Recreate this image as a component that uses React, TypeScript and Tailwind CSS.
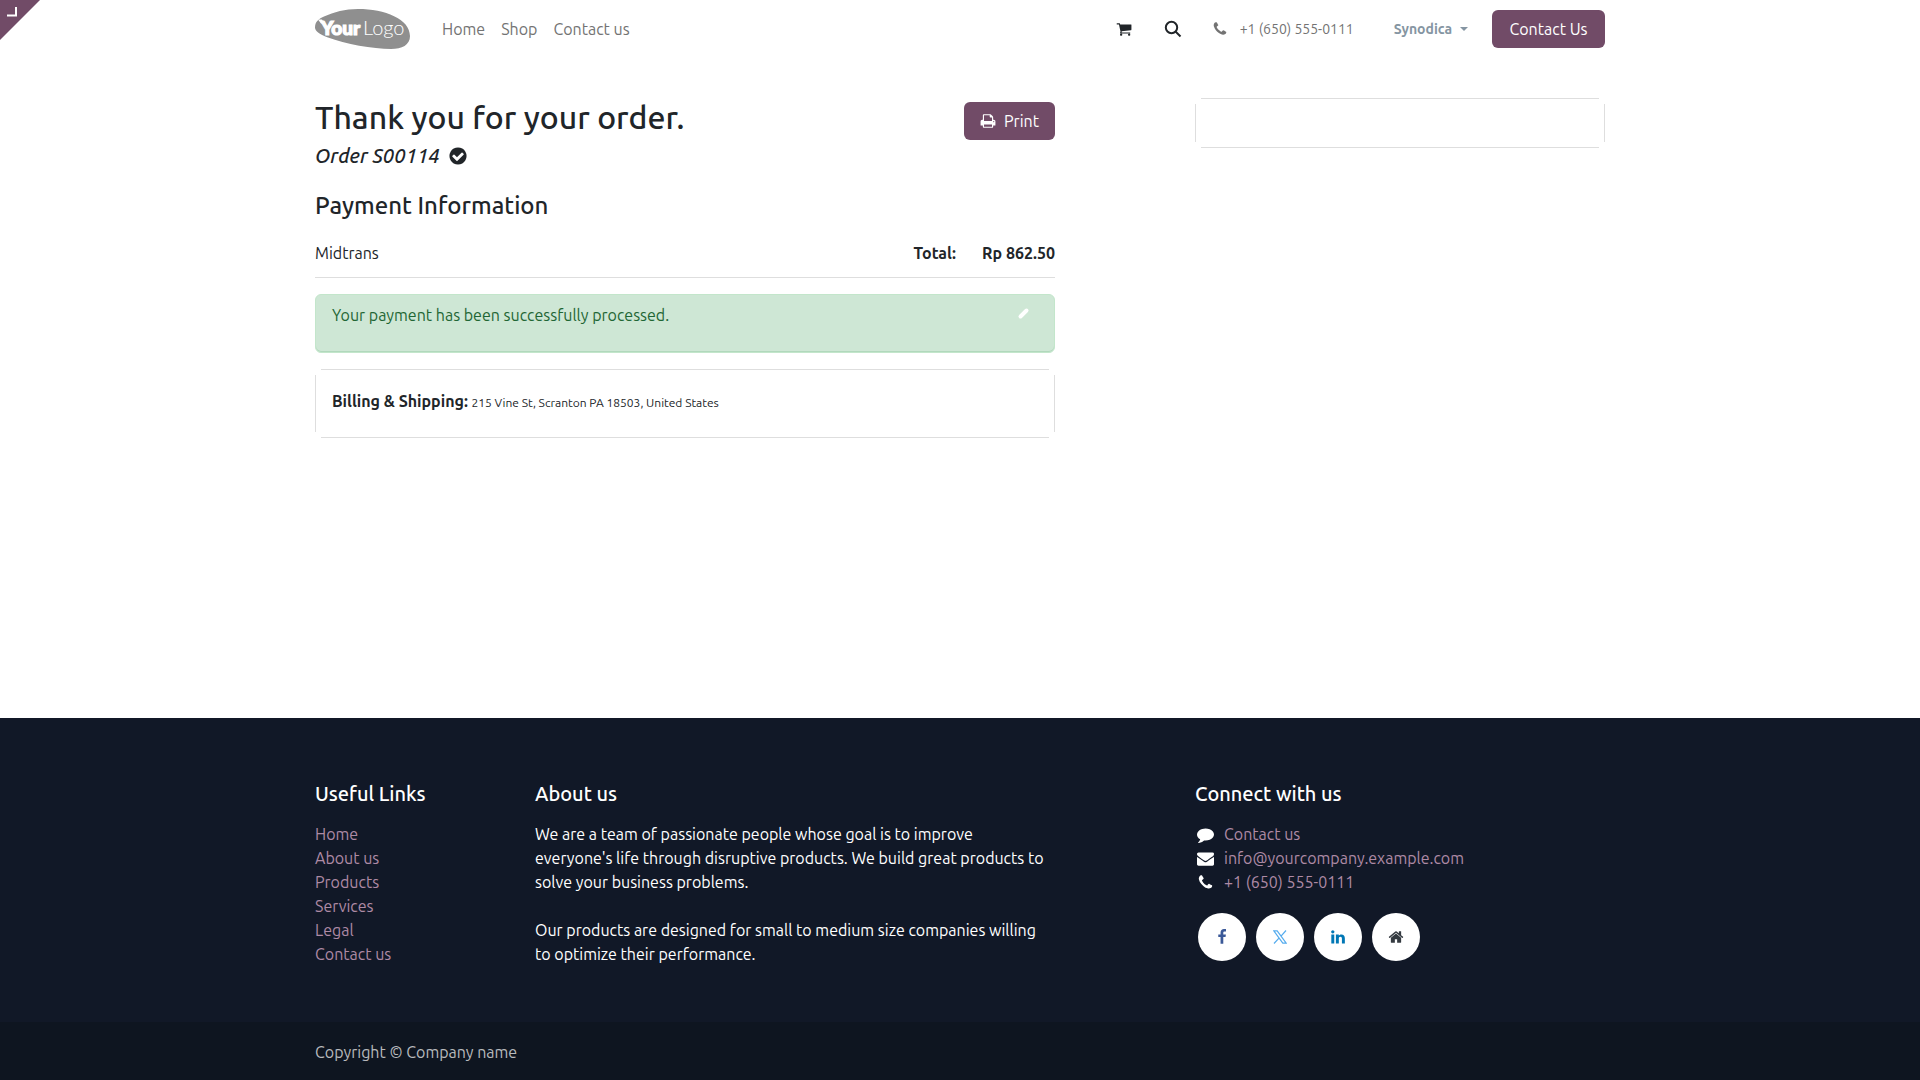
import type { ReactNode } from "react";

const ICONS = {
  cart: "M704 1536q0 52-38 90t-90 38-90-38-38-90 38-90 90-38 90 38 38 90zm896 0q0 52-38 90t-90 38-90-38-38-90 38-90 90-38 90 38 38 90zm128-1088v512q0 24-16.5 42.5t-40.5 21.5l-1044 122q13 60 13 70 0 16-24 64h920q26 0 45 19t19 45-19 45-45 19h-1024q-26 0-45-19t-19-45q0-11 8-31.5t16-36 21.5-40 15.5-29.5l-177-823h-204q-26 0-45-19t-19-45 19-45 45-19h256q16 0 28.5 6.5t19.5 15.5 13 24.5 8 26 5.5 29.5 4.5 26h1201q26 0 45 19t19 45z",
  phone: "M1600 1240q0 27-10 70.5t-21 68.5q-21 50-122 106-94 51-186 51-27 0-53-3.5t-57.5-12.5-47-14.5-55.5-20.5-49-18q-98-35-175-83-127-79-264-216t-216-264q-48-77-83-175-3-9-18-49t-20.5-55.5-14.5-47-12.5-57.5-3.5-53q0-92 51-186 56-101 106-122 25-11 68.5-21t70.5-10q14 0 21 3 18 6 53 76 11 19 30 54t35 63.5 31 53.5q3 4 17.5 25t21.5 35.5 7 28.5q0 20-28.5 50t-62 55-62 53-28.5 46q0 9 5 22.5t8.5 20.5 14 24 11.5 19q76 137 174 235t235 174q2 1 19 11.5t24 14 20.5 8.5 22.5 5q18 0 46-28.5t53-62 55-62 50-28.5q14 0 28.5 7t35.5 21.5 25 17.5q25 15 53.5 31t63.5 35 54 30q70 35 76 53 3 7 3 21z",
  print: "M448 1536h896v-256h-896v256zm0-640h896v-384h-160q-40 0-68-28t-28-68v-160h-640v640zm1152 64q0-26-19-45t-45-19-45 19-19 45 19 45 45 19 45-19 19-45zm128 0v416q0 13-9.5 22.5t-22.5 9.5h-224v160q0 40-28 68t-68 28h-960q-40 0-68-28t-28-68v-160h-224q-13 0-22.5-9.5t-9.5-22.5v-416q0-79 56.5-135.5t135.5-56.5h64v-544q0-40 28-68t68-28h672q40 0 88 20t76 48l152 152q28 28 48 76t20 88v256h64q79 0 135.5 56.5t56.5 135.5z",
  check: "M1412 734q0-28-18-46l-91-90q-19-19-45-19t-45 19l-408 407-226-226q-19-19-45-19t-45 19l-91 90q-18 18-18 46 0 27 18 45l362 362q19 19 45 19 27 0 46-19l543-543q18-18 18-45zm252 162q0 209-103 385.5t-279.5 279.5-385.5 103-385.5-103-279.5-279.5-103-385.5 103-385.5 279.5-279.5 385.5-103 385.5 103 279.5 279.5 103 385.5z",
  comment: "M1792 896q0 174-120 321.5t-326 233-450 85.5q-70 0-145-8-198 175-460 242-49 14-114 22-17 2-30.5-9t-17.5-29v-1q-3-4-.5-12t2-10 4.5-9.5l6-9 7-8.5 8-9q7-8 31-34.5t34.5-38 31-39.5 32.5-51 27-59 26-76q-157-89-247.5-220t-90.5-281q0-130 71-248.5t191-204.5 286-136.5 348-50.5q244 0 450 85.5t326 233 120 321.5z",
  envelope: "M1792 710v794q0 66-47 113t-113 47h-1472q-66 0-113-47t-47-113v-794q44 49 101 87 362 246 497 345 57 42 92.5 65.5t94.5 48 110 24.5h2q51 0 110-24.5t94.5-48 92.5-65.5q170-123 498-345 57-39 100-87zm0-294q0 79-49 151t-122 123q-376 261-468 325-10 7-42.5 31t-54 38-52 32.5-57.5 27-50 9h-2q-23 0-50-9t-57.5-27-52-32.5-54-38-42.5-31q-91-64-262-182.5t-205-142.5q-62-42-117-115.5t-55-136.5q0-78 41.5-130t118.5-52h1472q65 0 112.5 47t47.5 113z",
  facebook: "M1343 12v264h-157q-86 0-116 36t-30 108v189h293l-39 296h-254v759h-306v-759h-255v-296h255v-218q0-186 104-288.5t277-102.5q147 0 228 12z",
  linkedin: "M477 625v991h-330v-991h330zm21-306q1 73-50.5 122t-135.5 49h-2q-82 0-132-49t-50-122q0-74 51.5-122.5t134.5-48.5 133 48.5 51 122.5zm1166 729v568h-329v-530q0-105-40.5-164.5t-126.5-59.5q-63 0-105.5 34.5t-63.5 85.5q-11 30-11 81v553h-329q2-399 2-647t-1-296l-1-48h329v144h-2q20-32 41-56t56.5-52 87-43.5 114.5-15.5q171 0 275 113.5t104 332.5z",
  home: "M1472 992v480q0 26-19 45t-45 19h-384v-384h-256v384h-384q-26 0-45-19t-19-45v-480q0-1 .5-3t.5-3l575-474 575 474q1 2 1 6zm223-69l-62 74q-8 9-21 11h-3q-13 0-21-7l-692-577-692 577q-12 8-24 7-13-2-21-11l-62-74q-8-10-7-23.5t11-21.5l719-599q32-26 76-26t76 26l244 204v-195q0-14 9-23t23-9h192q14 0 23 9t9 23v408l219 182q10 8 11 21.5t-7 23.5z",
};

function Icon({ name, className = "h-4 w-4" }: { name: keyof typeof ICONS; className?: string }) {
  return (
    <svg viewBox="0 0 1792 1792" fill="currentColor" className={className} aria-hidden="true">
      <path d={ICONS[name]} />
    </svg>
  );
}

function Container({ children, className = "" }: { children: ReactNode; className?: string }) {
  return <div className={`mx-auto w-full max-w-[1320px] px-[15px] ${className}`}>{children}</div>;
}

// Card whose border stops short of its four corners
function Card({ children, className = "" }: { children?: ReactNode; className?: string }) {
  return (
    <div
      className={`relative px-[17px] before:pointer-events-none before:absolute before:inset-x-0 before:inset-y-1.5 before:border-x before:border-[#dedede] after:pointer-events-none after:absolute after:inset-x-1.5 after:inset-y-0 after:border-y after:border-[#dedede] ${className}`}
    >
      {children}
    </div>
  );
}

function Logo() {
  return (
    <svg viewBox="0 0 95 40" className="h-10 w-[95px]" role="img" aria-label="Your Logo">
      <path
        d="M0 18.5C0 13 3 10 9 7.5C19 3 30 0 43 0C70 0 95 10 95 27C95 36 87 40 76 40C58 40 30 35 13 28.5C4 25 0 22 0 18.5Z"
        fill="#8f8f8f"
      />
      <path d="M3 10.5h4l2 4h-3z" fill="#fff" />
      <text x="6" y="25.5" fill="#fff" stroke="#fff" strokeWidth="1.2" fontFamily="Lato, sans-serif" fontSize="19" fontWeight="900">
        Your
      </text>
      <text x="48" y="25.5" fill="#fff" fontFamily="Lato, sans-serif" fontSize="20" fontWeight="300">
        Logo
      </text>
    </svg>
  );
}

function Header() {
  return (
    <header>
      <Container className="flex h-[58px] items-center">
        <a href="#">
          <Logo />
        </a>
        <nav className="ml-8 flex gap-4 text-[#737373]">
          <a href="#">Home</a>
          <a href="#">Shop</a>
          <a href="#">Contact us</a>
        </nav>
        <div className="ml-auto flex items-center text-[#212529]">
          <a href="#" aria-label="Cart">
            <Icon name="cart" />
          </a>
          <button type="button" aria-label="Search" className="ml-8">
            <svg viewBox="0 0 18 18" className="h-[18px] w-[18px]" fill="none" stroke="currentColor" strokeWidth="2">
              <circle cx="7.5" cy="7.5" r="5.7" />
              <path d="M11.5 11.5L16.5 16.5" />
            </svg>
          </button>
          <a href="#" className="ml-[30px] flex items-center gap-3 text-sm text-[#737373]">
            <Icon name="phone" />
            +1 (650) 555-0111
          </a>
          <button type="button" className="ml-10 flex items-center gap-2 text-sm font-bold text-[#8595a2]">
            Synodica
            <span className="border-x-4 border-t-4 border-x-transparent" />
          </button>
          <button type="button" className="ml-6 h-[38px] w-[113px] rounded-md bg-[#714b67] text-white">
            Contact Us
          </button>
        </div>
      </Container>
    </header>
  );
}

function Order() {
  return (
    <main className="flex-1 pt-10 pb-16 text-[#212529]">
      <Container className="grid grid-cols-12 gap-x-[30px]">
        <div className="col-span-7">
          <div className="flex items-start justify-between">
            <div>
              <h1 className="text-[32px] leading-[38px] font-medium">Thank you for your order.</h1>
              <p className="mt-1.5 flex items-center gap-2 text-xl leading-7 font-medium">
                <em>Order S00114</em>
                <Icon name="check" className="h-5 w-5" />
              </p>
            </div>
            <button type="button" className="mt-1 flex h-[38px] items-center gap-2 rounded-md bg-[#714b67] px-4 text-white">
              <Icon name="print" />
              Print
            </button>
          </div>
          <h2 className="mt-5 text-2xl leading-8 font-medium">Payment Information</h2>
          <div className="mt-[19px] flex justify-between border-b border-[#dedede] pb-3">
            <span>Midtrans</span>
            <div className="flex gap-[26px] font-bold">
              <span>Total:</span>
              <span>Rp 862.50</span>
            </div>
          </div>
          <div className="mt-4 flex h-[59px] justify-between rounded-md border border-[#c3e6cb] bg-[#cee7d5] px-4 pt-2 text-[#1f6634] shadow-[inset_0_-1px_0_#b1d8bc]" role="status">
            <p>Your payment has been successfully processed.</p>
            <a href="#" aria-label="Edit message" className="mt-1 mr-2 h-3.5 w-3.5 text-white">
              <svg viewBox="0 0 14 14" className="h-3.5 w-3.5" stroke="currentColor" strokeWidth="4" strokeLinecap="round">
                <path d="M4.5 9.5L10.5 3.5" />
              </svg>
            </a>
          </div>
          <Card className="mt-4 pt-5 pb-[25px]">
            <b>Billing &amp; Shipping:</b> <span className="text-xs">215 Vine St, Scranton PA 18503, United States</span>
          </Card>
        </div>
        <aside className="col-span-4 col-start-9">
          <Card className="h-[50px]" />
        </aside>
      </Container>
    </main>
  );
}

const LINKS = ["Home", "About us", "Products", "Services", "Legal", "Contact us"];

const CONTACTS = [
  { icon: "comment", label: "Contact us" },
  { icon: "envelope", label: "info@yourcompany.example.com" },
  { icon: "phone", label: "+1 (650) 555-0111" },
] as const;

function SocialLink({ label, className, children }: { label: string; className: string; children: ReactNode }) {
  return (
    <a href="#" aria-label={label} className={`flex h-12 w-12 items-center justify-center rounded-full bg-white ${className}`}>
      {children}
    </a>
  );
}

function Footer() {
  return (
    <footer className="bg-[#111827] text-white">
      <Container className="grid grid-cols-12 gap-x-[30px] pt-16 pb-14">
        <div className="col-span-2">
          <h2 className="mb-4 text-xl leading-6 font-medium">Useful Links</h2>
          <ul className="text-[#ae8aa5]">
            {LINKS.map((link) => (
              <li key={link}>
                <a href="#">{link}</a>
              </li>
            ))}
          </ul>
        </div>
        <div className="col-span-5 pr-1">
          <h2 className="mb-4 text-xl leading-6 font-medium">About us</h2>
          <p>
            We are a team of passionate people whose goal is to improve everyone's life through disruptive products. We
            build great products to solve your business problems.
          </p>
          <p className="mt-6">
            Our products are designed for small to medium size companies willing to optimize their performance.
          </p>
        </div>
        <div className="col-span-4 col-start-9">
          <h2 className="mb-4 text-xl leading-6 font-medium">Connect with us</h2>
          <ul>
            {CONTACTS.map(({ icon, label }) => (
              <li key={label} className="flex items-center gap-2.5 pl-0.5">
                <Icon name={icon} className="h-[17px] w-[17px]" />
                <a href="#" className="text-[#ae8aa5]">
                  {label}
                </a>
              </li>
            ))}
          </ul>
          <div className="mt-[19px] flex gap-2.5 pl-[3px]">
            <SocialLink label="Facebook" className="text-[#3b5998]">
              <Icon name="facebook" />
            </SocialLink>
            <SocialLink label="X" className="text-[#55acee]">
              <svg viewBox="0 0 14 14" className="h-3.5 w-3.5" fill="none" stroke="currentColor" strokeWidth="1.2">
                <path d="M0.8 0.8H4.2L13.2 13.2H9.8ZM13 0.5L7.8 6.3M6.2 7.8L1 13.5" />
              </svg>
            </SocialLink>
            <SocialLink label="LinkedIn" className="text-[#0077b5]">
              <Icon name="linkedin" />
            </SocialLink>
            <SocialLink label="Website" className="text-[#343a40]">
              <Icon name="home" />
            </SocialLink>
          </div>
        </div>
      </Container>
      <div className="bg-[#0e1520] pt-[18px] pb-4 text-[#b8babd]">
        <Container>Copyright © Company name</Container>
      </div>
    </footer>
  );
}

export default function App() {
  return (
    <div className="flex min-h-screen flex-col bg-white font-['Ubuntu','Noto_Sans',sans-serif] text-base leading-6">
      <Header />
      <Order />
      <Footer />
      <a href="#" aria-label="Open editor" className="absolute top-0 left-0">
        <svg viewBox="0 0 40 40" className="h-10 w-10">
          <path d="M0 0h40L0 40z" fill="#714b67" />
          <path d="M7 15.5h9V7" fill="none" stroke="#fff" strokeWidth="2" />
        </svg>
      </a>
    </div>
  );
}
